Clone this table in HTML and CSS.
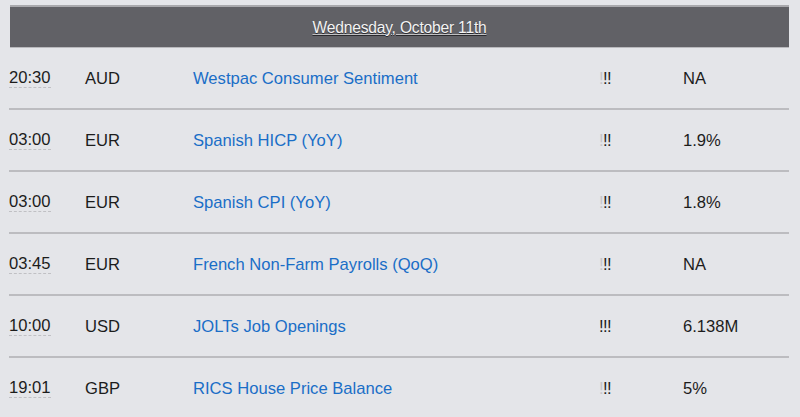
FILE: index.html
```html
<!DOCTYPE html>
<html>
<head>
<meta charset="utf-8">
<link rel="stylesheet" href="styles.css">
</head>
<body>
<div class="cal">
  <div class="day-head"><span class="day-title">Wednesday, October 11th</span></div>
  <div class="row">
    <span class="time">20:30</span><span class="cur">AUD</span><a class="ev">Westpac Consumer Sentiment</a><span class="imp"><i class="lo">!</i>!!</span><span class="act">NA</span>
  </div>
  <div class="row">
    <span class="time">03:00</span><span class="cur">EUR</span><a class="ev">Spanish HICP (YoY)</a><span class="imp"><i class="lo">!</i>!!</span><span class="act">1.9%</span>
  </div>
  <div class="row">
    <span class="time">03:00</span><span class="cur">EUR</span><a class="ev">Spanish CPI (YoY)</a><span class="imp"><i class="lo">!</i>!!</span><span class="act">1.8%</span>
  </div>
  <div class="row">
    <span class="time">03:45</span><span class="cur">EUR</span><a class="ev">French Non-Farm Payrolls (QoQ)</a><span class="imp"><i class="lo">!</i>!!</span><span class="act">NA</span>
  </div>
  <div class="row">
    <span class="time">10:00</span><span class="cur">USD</span><a class="ev">JOLTs Job Openings</a><span class="imp">!!!</span><span class="act">6.138M</span>
  </div>
  <div class="row last">
    <span class="time">19:01</span><span class="cur">GBP</span><a class="ev">RICS House Price Balance</a><span class="imp"><i class="lo">!</i>!!</span><span class="act">5%</span>
  </div>
</div>
</body>
</html>
```
FILE: styles.css
```css
html, body {
  margin: 0;
  padding: 0;
  background: #e4e5e9;
}
body {
  font-family: "Liberation Sans", Arial, sans-serif;
  color: #1c1c1c;
  font-size: 16.6px;
}
.cal {
  padding: 5px 11px 0 9px;
}
.day-head {
  margin-left: 1px;
  background: #616166;
  border-top: 2px solid #a9a9ad;
  border-bottom: 1px solid #b9b9bd;
  display: flex;
  align-items: center;
  justify-content: center;
  padding-top: 1px;
  box-sizing: border-box;
  height: 43px;
}
.day-title {
  color: #f4f4f4;
  font-size: 15.6px;
  letter-spacing: -0.2px;
  text-decoration: underline;
  text-decoration-color: rgba(255,255,255,0.6);
  text-shadow: 0 1px 0 #2a2a2e;
}
.row {
  display: grid;
  grid-template-columns: 76px 108px 406px 84px 1fr;
  align-items: center;
  height: 59px;
  padding-top: 1px;
  border-bottom: 2px solid #bcbcc0;
}
.row.last {
  border-bottom: none;
}
.time {
  justify-self: start;
  border-bottom: 1px dashed #c0c0c4;
  line-height: 18px;
}
.ev {
  color: #1a6ec7;
  text-decoration: none;
}
.imp {
  letter-spacing: -0.6px;
}
.lo {
  font-style: normal;
  color: #c4c4c8;
}
```
